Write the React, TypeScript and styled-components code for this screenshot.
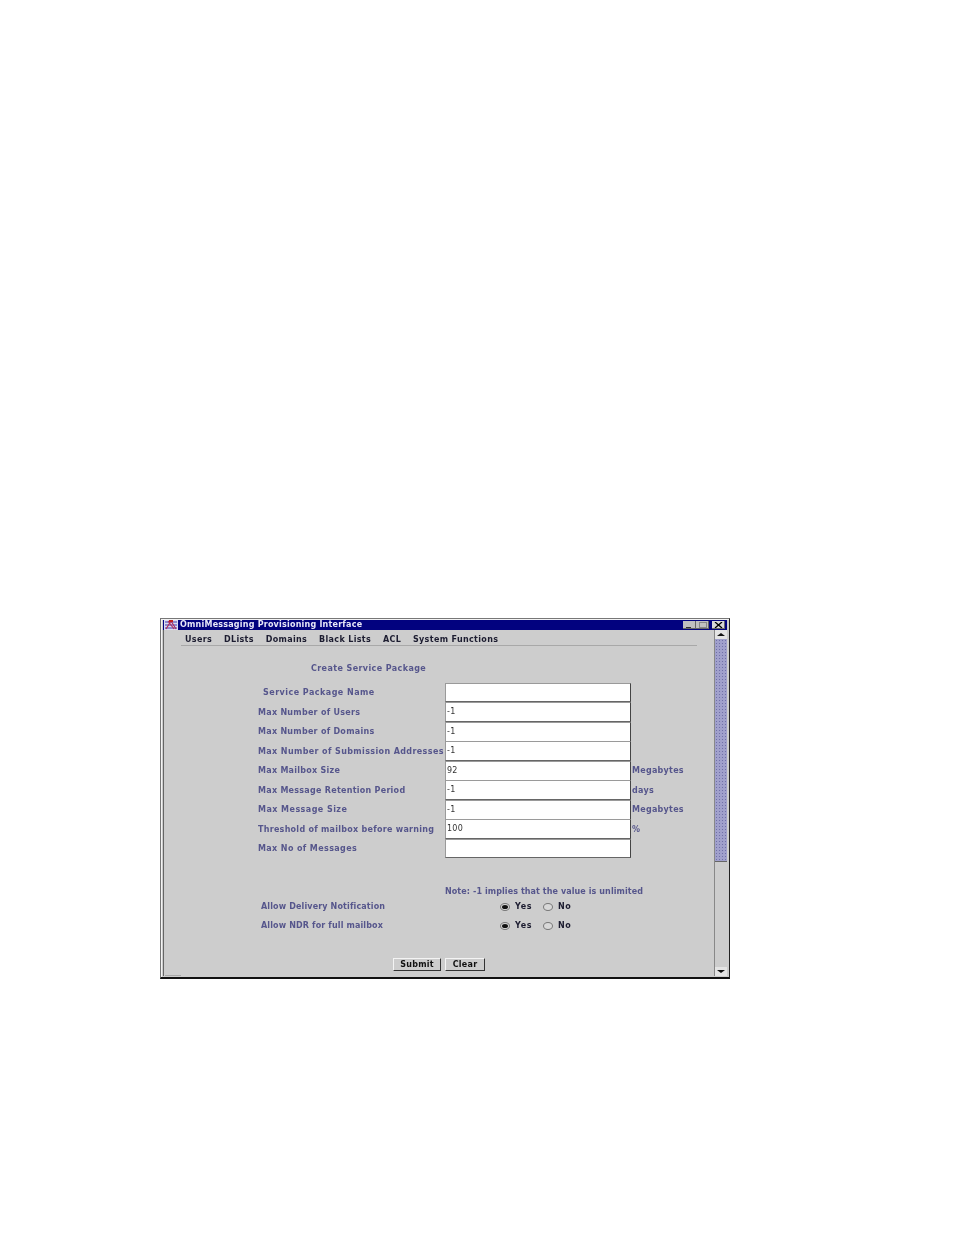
import styled, { createGlobalStyle } from "styled-components";

const GlobalStyle = createGlobalStyle`
  html, body { margin: 0; padding: 0; background: #fff; }
  body { font-family: "DejaVu Sans", sans-serif; }
`;

const fields = [
  { label: "Service Package Name", value: "", indent: 5, tracking: 0.47 },
  { label: "Max Number of Users", value: "-1" },
  { label: "Max Number of Domains", value: "-1" },
  { label: "Max Number of Submission Addresses", value: "-1", tracking: 0.38 },
  { label: "Max Mailbox Size", value: "92", unit: "Megabytes" },
  { label: "Max Message Retention Period", value: "-1", unit: "days" },
  { label: "Max Message Size", value: "-1", unit: "Megabytes", tracking: 0.45 },
  { label: "Threshold of mailbox before warning", value: "100", unit: "%" },
  { label: "Max No of Messages", value: "", tracking: 0.38 },
];

const menus = ["Users", "DLists", "Domains", "Black Lists", "ACL", "System Functions"];

function AppIcon() {
  return (
    <svg width="14" height="10" viewBox="0 0 14 10">
      <rect width="14" height="10" fill="#dcdcf0" />
      <path d="M1 2h12M1 5h12M1 8h12" stroke="#3a3ab0" strokeWidth="1" />
      <path d="M2 9l5-8 5 8M4 1l6 8" stroke="#b03060" strokeWidth="1.200" fill="none" />
      <path d="M5 0h4v2H5z" fill="#c02020" />
    </svg>
  );
}

function Radio({ checked }: { checked?: boolean }) {
  return <RadioDot $checked={checked} />;
}

function Choice() {
  return (
    <ChoiceGroup>
      <Radio checked />
      <ChoiceText $w={28}>Yes</ChoiceText>
      <Radio />
      <ChoiceText>No</ChoiceText>
    </ChoiceGroup>
  );
}

export default function App() {
  return (
    <Page>
      <GlobalStyle />
      <Window>
        <TitleBar>
          <AppIcon />
          <TitleText>OmniMessaging Provisioning Interface</TitleText>
          <WinButton $kind="min" />
          <WinButton $kind="max" />
          <CloseButton>
            <svg width="9" height="6" viewBox="0 0 9 6">
              <path d="M1 0l7 6M8 0L1 6" stroke="#000" strokeWidth="1.300" />
            </svg>
          </CloseButton>
        </TitleBar>
        <Body>
          <Main>
            <MenuBar>
              {menus.map((m) => (
                <MenuItem key={m}>{m}</MenuItem>
              ))}
            </MenuBar>
            <Heading>Create Service Package</Heading>
            <Form>
              {fields.map((f) => (
                <Row key={f.label}>
                  <Label $indent={f.indent} $tracking={f.tracking}>
                    {f.label}
                  </Label>
                  <Field>{f.value}</Field>
                  <Unit>{f.unit}</Unit>
                </Row>
              ))}
            </Form>
            <Note>Note: -1 implies that the value is unlimited</Note>
            <OptionRow $top={5}>
              <OptionLabel>Allow Delivery Notification</OptionLabel>
              <Choice />
            </OptionRow>
            <OptionRow $top={9}>
              <OptionLabel>Allow NDR for full mailbox</OptionLabel>
              <Choice />
            </OptionRow>
            <Buttons>
              <Button $w={48}>Submit</Button>
              <Button $w={40}>Clear</Button>
            </Buttons>
            <BottomEdge />
          </Main>
          <ScrollBar>
            <ScrollButton>
              <Arrow />
            </ScrollButton>
            <Thumb />
            <Track />
            <ScrollButton>
              <Arrow $down />
            </ScrollButton>
          </ScrollBar>
        </Body>
      </Window>
    </Page>
  );
}

const Page = styled.div`
  padding: 618px 0 0 160px;
  height: 617px;
`;

const Window = styled.div`
  box-sizing: border-box;
  width: 570px;
  height: 361px;
  background: #cdcdcd;
  border: 1px solid #777;
  border-right-color: #222;
  border-bottom: 2px solid #111;
  box-shadow: inset 1px 1px 0 #f4f4f4;
  padding: 1px 2px 1px 2px;
  display: flex;
  flex-direction: column;
  letter-spacing: 0.27px;
  filter: blur(0.3px);
`;

const TitleBar = styled.div`
  height: 10px;
  background: #02027f;
  display: flex;
  align-items: center;
  padding-left: 1px;
  padding-right: 2px;
  flex: none;
`;

const TitleText = styled.span`
  flex: 1;
  margin-left: 2px;
  color: #e8e8f8;
  font-size: 8px;
  font-weight: bold;
  letter-spacing: 0.22px;
  line-height: 10px;
  white-space: nowrap;
`;

const WinButton = styled.div<{ $kind: "min" | "max" }>`
  box-sizing: border-box;
  width: 13px;
  height: 8px;
  background: #c0c0c0;
  border-right: 1px solid #666;
  border-bottom: 1px solid #666;
  position: relative;
  &::after {
    content: "";
    position: absolute;
    ${(p) =>
      p.$kind === "min"
        ? "left: 3px; bottom: 0; width: 5px; height: 1px; background: #333;"
        : "left: 3px; top: 1px; width: 6px; height: 4px; border: 1px solid #888;"}
  }
`;

const CloseButton = styled.div`
  box-sizing: border-box;
  width: 13px;
  height: 8px;
  margin-left: 3px;
  background: #d8d8d8;
  border-right: 1px solid #666;
  border-bottom: 1px solid #666;
  display: flex;
  align-items: center;
  justify-content: center;
`;

const Body = styled.div`
  flex: 1;
  display: flex;
  min-height: 0;
  box-shadow: inset 1px 0 0 #666;
`;

const Main = styled.div`
  flex: 1;
  min-width: 0;
  display: flex;
  flex-direction: column;
`;

const MenuBar = styled.div`
  margin: 0 17px 0 18px;
  padding: 4px 0 0 4px;
  height: 11px;
  border-bottom: 1px solid #a8a8a8;
  display: flex;
  align-items: center;
  gap: 11.8px;
  letter-spacing: 0.35px;
`;

const MenuItem = styled.span`
  color: #1c1c30;
  font-size: 8px;
  font-weight: bold;
  line-height: 11px;
  white-space: nowrap;
`;

const Text = styled.span`
  color: #56568c;
  font-size: 8px;
  font-weight: bold;
  white-space: nowrap;
`;

const Heading = styled(Text)`
  margin: 18px 0 0 148px;
  line-height: 10px;
  height: 10px;
  letter-spacing: 0.4px;
`;

const Form = styled.div`
  margin: 9px 0 0 95px;
  display: flex;
  flex-direction: column;
`;

const Row = styled.div`
  height: 19.44px;
  display: grid;
  grid-template-columns: 187px 186px 1fr;
  align-items: center;
`;

const Label = styled(Text)<{ $indent?: number; $tracking?: number }>`
  padding-left: ${(p) => p.$indent ?? 0}px;
  letter-spacing: ${(p) => p.$tracking ?? 0.27}px;
`;

const Field = styled.div`
  box-sizing: border-box;
  height: 100%;
  background: #fff;
  border: 1px solid #9a9a9a;
  border-right-color: #444;
  border-bottom-color: #666;
  padding-left: 1px;
  color: #333;
  font-size: 8px;
  line-height: 18px;
`;

const Unit = styled(Text)`
  padding-left: 1px;
`;

const Note = styled(Text)`
  margin: 29px 0 0 282px;
  line-height: 10px;
  height: 10px;
  letter-spacing: 0.09px;
`;

const OptionRow = styled.div<{ $top: number }>`
  margin: ${(p) => p.$top}px 0 0 98px;
  height: 10px;
  display: grid;
  grid-template-columns: 239px 1fr;
  align-items: center;
`;

const OptionLabel = styled(Text)`
  letter-spacing: 0.14px;
`;

const ChoiceGroup = styled.div`
  display: flex;
  align-items: center;
`;

const RadioDot = styled.span<{ $checked?: boolean }>`
  box-sizing: border-box;
  width: 10px;
  height: 8px;
  margin-right: 5px;
  border-radius: 50%;
  border: 1px solid #777;
  background: #d8d8d8;
  display: flex;
  align-items: center;
  justify-content: center;
  &::after {
    content: "";
    display: ${(p) => (p.$checked ? "block" : "none")};
    width: 6px;
    height: 4px;
    border-radius: 50%;
    background: #111;
  }
`;

const ChoiceText = styled.span<{ $w?: number }>`
  width: ${(p) => p.$w ?? 20}px;
  color: #1c1c30;
  font-size: 8px;
  font-weight: bold;
  letter-spacing: 0.6px;
`;

const Buttons = styled.div`
  margin: 27px 0 0 230px;
  display: flex;
  gap: 4px;
`;

const Button = styled.div<{ $w: number }>`
  box-sizing: border-box;
  width: ${(p) => p.$w}px;
  height: 13px;
  background: #cdcdcd;
  border: 1px solid #f4f4f4;
  border-right-color: #333;
  border-bottom-color: #333;
  color: #111;
  font-size: 8px;
  font-weight: bold;
  line-height: 11px;
  text-align: center;
`;

const BottomEdge = styled.div`
  margin: auto 0 0 2px;
  width: 16px;
  height: 1px;
  background: #a8a8a8;
`;

const ScrollBar = styled.div`
  width: 13px;
  flex: none;
  display: flex;
  flex-direction: column;
  border-left: 1px solid #888;
  box-sizing: border-box;
`;

const ScrollButton = styled.div`
  height: 9px;
  flex: none;
  background: #e4e4e4;
  display: flex;
  align-items: center;
  justify-content: center;
`;

const Arrow = styled.span<{ $down?: boolean }>`
  width: 0;
  height: 0;
  border-left: 4px solid transparent;
  border-right: 4px solid transparent;
  ${(p) => (p.$down ? "border-top: 3px solid #111;" : "border-bottom: 3px solid #111;")}
`;

const Thumb = styled.div`
  height: 223px;
  flex: none;
  background-color: #a0a0cc;
  background-image: radial-gradient(#7070a8 0.7px, transparent 0.8px);
  background-size: 3px 3px;
  border-bottom: 1px solid #666;
  box-sizing: border-box;
`;

const Track = styled.div`
  flex: 1;
  background: #cdcdcd;
`;
